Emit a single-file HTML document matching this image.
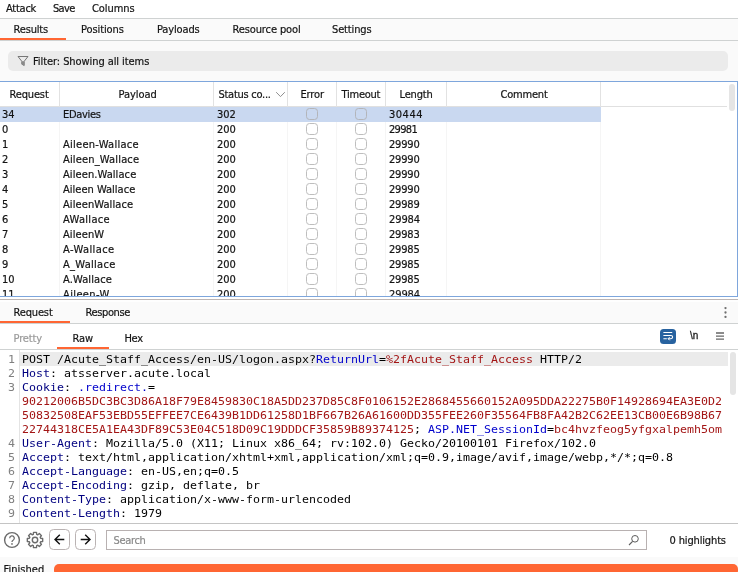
<!DOCTYPE html>
<html><head><meta charset="utf-8"><title>Intruder attack</title>
<style>
html,body{margin:0;padding:0;}
body{width:738px;height:572px;overflow:hidden;background:#fafafa;position:relative;
 font-family:"DejaVu Sans Condensed","DejaVu Sans","Liberation Sans",sans-serif;font-stretch:condensed;font-size:11px;color:#141414;-webkit-text-stroke:0.2px currentColor;}
div,span,i,b{position:absolute;box-sizing:border-box;white-space:pre;font-weight:normal;font-style:normal;}
.menubar{left:0;top:0;width:738px;height:18px;background:#fff;}
.menubar span{top:1px;line-height:14px;}
.hline{left:0;width:738px;height:1px;background:#cfd2d2;}
.tab{line-height:14px;}
.orange{background:#ff6633;height:2px;}
.filter{left:8px;top:51px;width:720px;height:20px;border-radius:5px;background:#ebebeb;}
.table{left:0;top:81px;width:738px;height:216px;background:#fff;border-top:1px solid #7ea6dc;border-bottom:1px solid #7ea6dc;border-right:1px solid #7ea6dc;overflow:hidden;}
.th{top:0;height:25px;line-height:14px;}
.th span{top:5px;}
.vsep{top:0;width:1px;height:25px;background:#e2e2e2;}
.vsep2{top:25px;width:1px;height:191px;background:#f5f5f5;}
.row{left:0;width:601px;height:15px;}
.row.sel{background:#c9d8f0;}
.row .c{top:0;line-height:15px;}
.cb{top:1px;width:12px;height:12px;border:1px solid #bebebe;border-radius:3.5px;background:#fff;}
.sel .cb{background:#c9d8f0;border-color:#b3b5ba;}
.ln{left:0;width:738px;height:14px;font-family:"DejaVu Sans Mono","Liberation Mono",monospace;font-size:11px;letter-spacing:0;line-height:14px;color:#000;font-stretch:normal;-webkit-text-stroke:0;}
.ln b,.ln span{position:static;}
.ln .num{position:absolute;left:0;top:1px;width:15.100px;text-align:right;color:#808080;letter-spacing:0;transform:scaleX(1.05699);transform-origin:100% 0;}
.ln .tx{position:absolute;left:22px;top:1px;transform:scaleX(1.05699);transform-origin:0 0;}
.ln .hlbg{position:absolute;left:20px;top:0;width:708px;height:14px;background:#ebebeb;}
.hn{color:#000080;}
.pn{color:#0000cc;}
.pv{color:#a31515;}
#app{left:0;top:0;width:738px;height:572px;overflow:hidden;will-change:transform;}
</style></head><body><div id="app">
<div class="menubar"></div>
<span class="tab" style="left:6px;top:2px;letter-spacing:-0.25px;">Attack</span><span class="tab" style="left:53px;top:2px;letter-spacing:-0.667px;">Save</span><span class="tab" style="left:92px;top:2px;letter-spacing:-0.083px;">Columns</span>
<div class="hline" style="top:18px"></div>
<span class="tab" style="left:13.5px;top:23px;letter-spacing:-0.167px;">Results</span>
<span class="tab" style="left:81px;top:23px;letter-spacing:-0.094px;">Positions</span>
<span class="tab" style="left:157px;top:23px;letter-spacing:-0.143px;">Payloads</span>
<span class="tab" style="left:232.5px;top:23px;letter-spacing:-0.117px;">Resource pool</span>
<span class="tab" style="left:332px;top:23px;letter-spacing:-0.143px;">Settings</span>
<div class="orange" style="left:0;top:38px;width:66px"></div>
<div class="hline" style="top:40px"></div>
<div class="filter"></div>
<svg style="position:absolute;left:16px;top:55px" width="14" height="13" viewBox="0 0 14 13"><path d="M2 1.500h10l-3.800 4.800v4.200l-2.400-1.300v-2.900z" fill="none" stroke="#777" stroke-width="1"/><path d="M5.800 6.300h2.400v4.200l-2.400-1.300z" fill="#8a8a8a"/></svg>
<span class="tab" style="left:33px;top:55px;letter-spacing:-0.073px;">Filter: Showing all items</span>

<div class="table">
 <div class="th" style="left:0;width:738px;border-bottom:1px solid #e0e0e0;background:#fff;">
 </div>
 <svg style="position:absolute;left:276px;top:9px" width="10" height="7" viewBox="0 0 10 7"><path d="M0.200 1.200l4.300 4.400l4.300-4.400" fill="none" stroke="#8e8e8e" stroke-width="1"/></svg>
 <i class="vsep" style="left:59px"></i><i class="vsep" style="left:213px"></i><i class="vsep" style="left:287px"></i><i class="vsep" style="left:336px"></i><i class="vsep" style="left:385px"></i><i class="vsep" style="left:446px"></i><i class="vsep" style="left:600px"></i>
 <i class="vsep2" style="left:59px"></i><i class="vsep2" style="left:213px"></i><i class="vsep2" style="left:287px"></i><i class="vsep2" style="left:336px"></i><i class="vsep2" style="left:385px"></i><i class="vsep2" style="left:446px"></i><i class="vsep2" style="left:600px"></i>
 <div style="left:727px;top:0;width:10px;height:25px;background:#fff"></div>
 <div style="left:729px;top:2px;width:6px;height:27px;border-radius:3px;background:#e5e5e5"></div>
</div>
<span class="tab" style="left:9.5px;top:88px;letter-spacing:-0.15px;">Request</span>
<span class="tab" style="left:118.5px;top:88px;letter-spacing:-0.05px;">Payload</span>
<span class="tab" style="left:218.5px;top:88px;letter-spacing:-0.273px;">Status co...</span>
<span class="tab" style="left:300.5px;top:88px;letter-spacing:-0.15px;">Error</span>
<span class="tab" style="left:341.5px;top:88px;letter-spacing:-0.233px;">Timeout</span>
<span class="tab" style="left:399.5px;top:88px;letter-spacing:-0.16px;">Length</span>
<span class="tab" style="left:500.5px;top:88px;letter-spacing:-0.2px;">Comment</span>
<div id="rows" style="left:0;top:0;width:738px;height:296px;overflow:hidden;">
<div class="row sel" style="top:107px"><span class="c" style="left:2px">34</span><span class="c" style="left:63px;letter-spacing:-0.294px">EDavies</span><span class="c" style="left:217px">302</span><i class="cb" style="left:306px"></i><i class="cb" style="left:355px"></i><span class="c" style="left:389px;letter-spacing:0.5px">30444</span></div>
<div class="row" style="top:122px"><span class="c" style="left:2px">0</span><span class="c" style="left:63px;letter-spacing:0px"></span><span class="c" style="left:217px">200</span><i class="cb" style="left:306px"></i><i class="cb" style="left:355px"></i><span class="c" style="left:389px;letter-spacing:-0.7px">29981</span></div>
<div class="row" style="top:137px"><span class="c" style="left:2px">1</span><span class="c" style="left:63px;letter-spacing:0.267px">Aileen-Wallace</span><span class="c" style="left:217px">200</span><i class="cb" style="left:306px"></i><i class="cb" style="left:355px"></i><span class="c" style="left:389px;letter-spacing:-0.17px">29990</span></div>
<div class="row" style="top:152px"><span class="c" style="left:2px">2</span><span class="c" style="left:63px;letter-spacing:0.165px">Aileen_Wallace</span><span class="c" style="left:217px">200</span><i class="cb" style="left:306px"></i><i class="cb" style="left:355px"></i><span class="c" style="left:389px;letter-spacing:-0.17px">29990</span></div>
<div class="row" style="top:167px"><span class="c" style="left:2px">3</span><span class="c" style="left:63px;letter-spacing:0.086px">Aileen.Wallace</span><span class="c" style="left:217px">200</span><i class="cb" style="left:306px"></i><i class="cb" style="left:355px"></i><span class="c" style="left:389px;letter-spacing:-0.17px">29990</span></div>
<div class="row" style="top:182px"><span class="c" style="left:2px">4</span><span class="c" style="left:63px;letter-spacing:0.009px">Aileen Wallace</span><span class="c" style="left:217px">200</span><i class="cb" style="left:306px"></i><i class="cb" style="left:355px"></i><span class="c" style="left:389px;letter-spacing:-0.17px">29990</span></div>
<div class="row" style="top:197px"><span class="c" style="left:2px">5</span><span class="c" style="left:63px;letter-spacing:0.092px">AileenWallace</span><span class="c" style="left:217px">200</span><i class="cb" style="left:306px"></i><i class="cb" style="left:355px"></i><span class="c" style="left:389px;letter-spacing:-0.17px">29989</span></div>
<div class="row" style="top:212px"><span class="c" style="left:2px">6</span><span class="c" style="left:63px;letter-spacing:0.327px">AWallace</span><span class="c" style="left:217px">200</span><i class="cb" style="left:306px"></i><i class="cb" style="left:355px"></i><span class="c" style="left:389px;letter-spacing:-0.1px">29984</span></div>
<div class="row" style="top:227px"><span class="c" style="left:2px">7</span><span class="c" style="left:63px;letter-spacing:0.099px">AileenW</span><span class="c" style="left:217px">200</span><i class="cb" style="left:306px"></i><i class="cb" style="left:355px"></i><span class="c" style="left:389px;letter-spacing:-0.17px">29983</span></div>
<div class="row" style="top:242px"><span class="c" style="left:2px">8</span><span class="c" style="left:63px;letter-spacing:0.415px">A-Wallace</span><span class="c" style="left:217px">200</span><i class="cb" style="left:306px"></i><i class="cb" style="left:355px"></i><span class="c" style="left:389px;letter-spacing:-0.17px">29985</span></div>
<div class="row" style="top:257px"><span class="c" style="left:2px">9</span><span class="c" style="left:63px;letter-spacing:0.291px">A_Wallace</span><span class="c" style="left:217px">200</span><i class="cb" style="left:306px"></i><i class="cb" style="left:355px"></i><span class="c" style="left:389px;letter-spacing:-0.17px">29985</span></div>
<div class="row" style="top:272px"><span class="c" style="left:2px">10</span><span class="c" style="left:63px;letter-spacing:0.122px">A.Wallace</span><span class="c" style="left:217px">200</span><i class="cb" style="left:306px"></i><i class="cb" style="left:355px"></i><span class="c" style="left:389px;letter-spacing:-0.17px">29985</span></div>
<div class="row" style="top:287px"><span class="c" style="left:2px">11</span><span class="c" style="left:63px;letter-spacing:0.375px">Aileen-W</span><span class="c" style="left:217px">200</span><i class="cb" style="left:306px"></i><i class="cb" style="left:355px"></i><span class="c" style="left:389px;letter-spacing:-0.1px">29984</span></div>
</div>

<span class="tab" style="left:13.5px;top:306px;letter-spacing:-0.15px;">Request</span>
<span class="tab" style="left:85.5px;top:306px;letter-spacing:-0.371px;">Response</span>
<div class="orange" style="left:0;top:321px;width:70px"></div>
<div style="left:0;top:300px;width:738px;height:2px;background:#fefefe"></div>
<div style="left:0;top:324px;width:738px;height:25px;background:#fff"></div>
<div class="hline" style="top:323px"></div>
<div style="left:0;top:297px;width:738px;height:2px;background:#fff"></div><div class="hline" style="top:299px;background:#bdb6b5"></div>
<svg style="position:absolute;left:722px;top:305px" width="7" height="14" viewBox="0 0 7 14"><circle cx="3.500" cy="3.050" r="1.150" fill="#6e6e6e"/><circle cx="3.500" cy="7.500" r="1.150" fill="#6e6e6e"/><circle cx="3.500" cy="11.900" r="1.150" fill="#6e6e6e"/></svg>

<span class="tab" style="left:13.5px;top:332px;letter-spacing:-0.12px;color:#9a9a9a">Pretty</span>
<span class="tab" style="left:72.5px;top:332px;letter-spacing:-0.1px;">Raw</span>
<span class="tab" style="left:124.5px;top:332px;letter-spacing:-0.35px;">Hex</span>
<div class="orange" style="left:57px;top:347px;width:52px"></div>
<div class="hline" style="top:349px"></div>
<div style="left:660px;top:329px;width:16px;height:15px;border-radius:3.5px;background:#27629f"></div>
<svg style="position:absolute;left:660px;top:329px" width="16" height="15" viewBox="0 0 16 15"><path d="M3.800 3.500h8M3.800 6.500h7.200a1.600 1.600 0 0 1 0 3.200h-2.600M3.800 9.700h2.600" fill="none" stroke="#fff" stroke-width="1.1" stroke-linecap="round"/><path d="M9.400 8.400l-1.300 1.300l1.300 1.300" fill="none" stroke="#fff" stroke-width="1" stroke-linecap="round"/></svg>
<span style="left:690px;top:329px;font-family:'Liberation Sans',sans-serif;font-size:10px;line-height:14px;font-stretch:normal;color:#222;-webkit-text-stroke:0.3px #222">\n</span>
<svg style="position:absolute;left:716px;top:331px" width="10" height="10" viewBox="0 0 10 10"><path d="M0 2h8M0 5.100h8M0 8.200h8" stroke="#666" stroke-width="1.300"/></svg>

<div id="editor" style="left:0;top:350px;width:738px;height:173px;background:#fff;overflow:hidden;"></div>
<div style="left:0;top:350px;width:738px;height:173px;overflow:hidden;">
<div style="left:0;top:-350px;width:738px;height:600px;">
<div style="left:19px;top:350px;width:1px;height:173px;background:#e4e4e4"></div>
<div class="ln" style="top:352px"><i class=hlbg></i><span class="num">1</span><span class="tx">POST /Acute_Staff_Access/en-US/logon.aspx?<b class="pn">ReturnUrl</b>=<b class="pv">%2fAcute_Staff_Access</b> HTTP/2</span></div>
<div class="ln" style="top:366px"><span class="num">2</span><span class="tx"><b class="hn">Host</b>: atsserver.acute.local</span></div>
<div class="ln" style="top:380px"><span class="num">3</span><span class="tx"><b class="hn">Cookie</b>: <b class="pn">.redirect.</b>=</span></div>
<div class="ln" style="top:394px"><span class="num"></span><span class="tx"><b class="pv">90212006B5DC3BC3D86A18F79E8459830C18A5DD237D85C8F0106152E2868455660152A095DDA22275B0F14928694EA3E0D2</b></span></div>
<div class="ln" style="top:408px"><span class="num"></span><span class="tx"><b class="pv">50832508EAF53EBD55EFFEE7CE6439B1DD61258D1BF667B26A61600DD355FEE260F35564FB8FA42B2C62EE13CB00E6B98B67</b></span></div>
<div class="ln" style="top:422px"><span class="num"></span><span class="tx"><b class="pv">22744318CE5A1EA43DF89C53E04C518D09C19DDDCF35859B89374125</b>; <b class="pn">ASP.NET_SessionId</b>=<b class="pv">bc4hvzfeog5yfgxalpemh5om</b></span></div>
<div class="ln" style="top:436px"><span class="num">4</span><span class="tx"><b class="hn">User-Agent</b>: Mozilla/5.0 (X11; Linux x86_64; rv:102.0) Gecko/20100101 Firefox/102.0</span></div>
<div class="ln" style="top:450px"><span class="num">5</span><span class="tx"><b class="hn">Accept</b>: text/html,application/xhtml+xml,application/xml;q=0.9,image/avif,image/webp,*/*;q=0.8</span></div>
<div class="ln" style="top:464px"><span class="num">6</span><span class="tx"><b class="hn">Accept-Language</b>: en-US,en;q=0.5</span></div>
<div class="ln" style="top:478px"><span class="num">7</span><span class="tx"><b class="hn">Accept-Encoding</b>: gzip, deflate, br</span></div>
<div class="ln" style="top:492px"><span class="num">8</span><span class="tx"><b class="hn">Content-Type</b>: application/x-www-form-urlencoded</span></div>
<div class="ln" style="top:506px"><span class="num">9</span><span class="tx"><b class="hn">Content-Length</b>: 1979</span></div>
<div class="ln" style="top:520px;opacity:.55"><span class="num"></span><span class="tx"><b class="hn">Origin</b>:</span></div>
<div style="left:730px;top:352px;width:6px;height:43px;border-radius:3px;background:#e5e5e5"></div>
</div></div>
<div style="left:0;top:524px;width:738px;height:33px;background:#fff"></div>
<div class="hline" style="top:523px;background:#c4c4c4"></div>

<svg style="position:absolute;left:3px;top:531px" width="18" height="18" viewBox="0 0 18 18"><circle cx="9" cy="9" r="7.400" fill="none" stroke="#6b6b6b" stroke-width="1.400"/><path d="M6.700 7.200a2.300 2.300 0 1 1 3.400 2c-.8.450-1.100.900-1.100 1.700" fill="none" stroke="#6b6b6b" stroke-width="1.300"/><circle cx="9" cy="12.900" r=".85" fill="#6b6b6b"/></svg>
<svg style="position:absolute;left:25px;top:530px" width="20" height="20" viewBox="0 0 20 20"><g fill="none" stroke="#6b6b6b" stroke-width="1.4" stroke-linejoin="round"><circle cx="10" cy="10" r="2.7"/><path d="M8.32 4.34L8.51 2.34L11.49 2.34L11.68 4.34L12.82 4.81L14.36 3.53L16.47 5.64L15.19 7.18L15.66 8.32L17.66 8.51L17.66 11.49L15.66 11.68L15.19 12.82L16.47 14.36L14.36 16.47L12.82 15.19L11.68 15.66L11.49 17.66L8.51 17.66L8.32 15.66L7.18 15.19L5.64 16.47L3.53 14.36L4.81 12.82L4.34 11.68L2.34 11.49L2.34 8.51L4.34 8.32L4.81 7.18L3.53 5.64L5.64 3.53L7.18 4.81Z"/></g></svg>
<div style="left:49px;top:529px;width:21px;height:21px;border:1px solid #bab3b3;border-radius:4.500px;background:#fff"></div>
<div style="left:75px;top:529px;width:21px;height:21px;border:1px solid #bab3b3;border-radius:4.500px;background:#fff"></div>
<svg style="position:absolute;left:53px;top:533px" width="13" height="13" viewBox="0 0 13 13"><path d="M11.300 6.500h-9M6.800 1.700l-4.800 4.800l4.800 4.800" fill="none" stroke="#111" stroke-width="1.400"/></svg>
<svg style="position:absolute;left:79px;top:533px" width="13" height="13" viewBox="0 0 13 13"><path d="M1.700 6.500h9M6.200 1.700l4.800 4.800l-4.800 4.800" fill="none" stroke="#111" stroke-width="1.400"/></svg>
<div style="left:106px;top:530px;width:541px;height:20px;border:1px solid #b8b1b1;background:#fff"></div>
<span class="tab" style="left:113.5px;top:534px;letter-spacing:-0.32px;color:#8a8a8a">Search</span>
<svg style="position:absolute;left:628px;top:534px" width="12" height="12" viewBox="0 0 12 12"><circle cx="7" cy="4.800" r="3.300" fill="none" stroke="#5c5c5c" stroke-width="1"/><path d="M4.600 7.300l-3.600 3.700" stroke="#5c5c5c" stroke-width="1.100"/></svg>
<span class="tab" style="left:669.5px;top:534px;letter-spacing:-0.145px;">0 highlights</span>

<span class="tab" style="left:3.5px;top:563px;letter-spacing:0.029px;">Finished</span>
<div style="left:54px;top:564px;width:683.500px;height:12px;border-radius:5px;background:#ff6633"></div>
</div></body></html>
